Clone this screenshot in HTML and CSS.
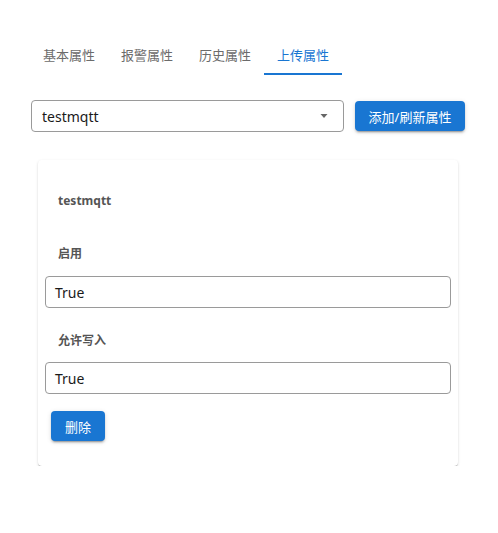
FILE: index.html
```html
<!DOCTYPE html>
<html lang="zh">
<head>
<meta charset="utf-8">
<link rel="stylesheet" href="styles.css">
</head>
<body>
<div class="page">
  <div class="tabs">
    <div class="tab">基本属性</div>
    <div class="tab">报警属性</div>
    <div class="tab">历史属性</div>
    <div class="tab active">上传属性</div>
  </div>
  <div class="toolbar">
    <div class="select">
      <span>testmqtt</span>
      <svg class="arrow" width="10" height="6" viewBox="0 0 10 6"><path d="M1.5 1h7L5 5z" fill="#666"/></svg>
    </div>
    <button class="btn">添加/刷新属性</button>
  </div>
  <div class="card">
    <div class="title">testmqtt</div>
    <div class="label first">启用</div>
    <div class="input">True</div>
    <div class="label">允许写入</div>
    <div class="input">True</div>
    <button class="btn del">删除</button>
  </div>
</div>
</body>
</html>
```

FILE: styles.css
```css
* { box-sizing: border-box; }
body {
  margin: 0;
  background: #fff;
  font-family: "Segoe UI", "Noto Sans", "Noto Sans CJK SC", sans-serif;
  color: #222;
}
.page {
  padding: 35px 0 0 30px;
}
.tabs {
  display: flex;
  height: 40px;
}
.tab {
  width: 78px;
  display: flex;
  align-items: center;
  justify-content: center;
  font-size: 13px;
  color: #6b6b6b;
  border-bottom: 2px solid transparent;
}
.tab.active {
  color: #1976d2;
  border-bottom-color: #1976d2;
}
.toolbar {
  margin-top: 25px;
  display: flex;
  align-items: center;
  gap: 11px;
  padding-left: 1px;
}
.select {
  width: 313px;
  height: 32px;
  border: 1px solid #9a9a9a;
  border-radius: 4px;
  display: flex;
  align-items: center;
  justify-content: space-between;
  padding: 0 14px 0 10px;
  font-size: 14px;
  color: #1a1a1a;
}
.arrow { display: block; }
.btn {
  font-family: inherit;
  border: none;
  background: #1976d2;
  color: #fff;
  font-size: 13px;
  border-radius: 4px;
  height: 30px;
  padding: 0;
  box-shadow: 0 3px 1px -2px rgba(0,0,0,0.2), 0 2px 2px rgba(0,0,0,0.14), 0 1px 5px rgba(0,0,0,0.12);
}
.toolbar .btn { width: 110px; }
.card {
  margin: 28px 0 0 8px;
  width: 420px;
  padding: 33px 7px 25px;
  border-radius: 4px;
  background: #fff;
  box-shadow: 0 2px 1px -1px rgba(0,0,0,0.2), 0 1px 1px rgba(0,0,0,0.14), 0 1px 3px rgba(0,0,0,0.12);
}
.title, .label {
  font-size: 12px;
  font-weight: 700;
  color: #555;
  line-height: 16px;
  padding-left: 13px;
}
.label {
  margin-top: 25px;
  margin-bottom: 13px;
}
.label.first {
  margin-top: 37px;
  margin-bottom: 14px;
}
.input {
  height: 32px;
  border: 1px solid #9a9a9a;
  border-radius: 4px;
  display: flex;
  align-items: center;
  padding-left: 9px;
  font-size: 14px;
  color: #1a1a1a;
}
.input + .label { margin-top: 25px; }
.del {
  display: block;
  width: 54px;
  margin: 17px 0 0 6px;
}
```
